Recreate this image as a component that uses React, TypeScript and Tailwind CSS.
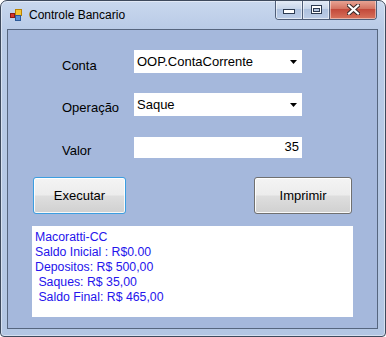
import * as React from 'react';

const font = { fontFamily: '"Liberation Sans", Arial, sans-serif' };

/* ========================= title bar bits ========================= */
function AppIcon() {
  return (
    <svg width="12" height="12" viewBox="0 0 12 12" className="mt-[8px] ml-[9px] shrink-0">
      <rect x="0.5" y="4.5" width="4" height="4" fill="#d8342c" stroke="#8c1a14" />
      <rect x="5.5" y="0.5" width="6" height="6" fill="#f5c534" stroke="#b98300" />
      <rect x="5.5" y="6.5" width="5" height="5" fill="#5b8fd6" stroke="#2c5a98" />
    </svg>
  );
}

function CaptionButtons() {
  return (
    <div className="-mt-[1px] mr-[8px] flex h-[20px] overflow-hidden rounded-b-[4px] border border-t-0 border-[#4f5e78]">
      <div className="flex w-[26px] items-center justify-center bg-[linear-gradient(#e6edf7,#c8d6ea_45%,#aec1de_50%,#bccde7)] pt-[4px] shadow-[inset_0_0_0_1px_rgba(255,255,255,0.55)]">
        <svg width="12" height="5" viewBox="0 0 12 5">
          <rect x="0.5" y="0.5" width="11" height="4" fill="#fff" stroke="#2c3a50" />
        </svg>
      </div>
      <div className="w-[1px] bg-[#4f5e78]" />
      <div className="flex w-[26px] items-center justify-center bg-[linear-gradient(#e6edf7,#c8d6ea_45%,#aec1de_50%,#bccde7)] shadow-[inset_0_0_0_1px_rgba(255,255,255,0.55)]">
        <svg width="11" height="9" viewBox="0 0 11 9">
          <rect x="0.5" y="0.5" width="10" height="8" fill="#fff" stroke="#2c3a50" />
          <rect x="2.5" y="3.5" width="6" height="3" fill="#b4c4de" stroke="#2c3a50" />
        </svg>
      </div>
      <div className="w-[1px] bg-[#4f5e78]" />
      <div className="flex w-[46px] items-center justify-center bg-[linear-gradient(#eaa99a,#d47462_45%,#c34a3b_50%,#d8735c)] shadow-[inset_0_0_0_1px_rgba(255,255,255,0.45)]">
        <svg width="13" height="11" viewBox="0 0 13 11">
          <path d="M2 1.5 L11 9.5 M11 1.5 L2 9.5" stroke="#3a2a2a" strokeWidth="4.2" strokeLinecap="square" />
          <path d="M2 1.5 L11 9.5 M11 1.5 L2 9.5" stroke="#fff" strokeWidth="2.2" strokeLinecap="square" />
        </svg>
      </div>
    </div>
  );
}

/* ========================= form controls ========================= */
function Combo({ value }: { value: string }) {
  return (
    <div className="flex h-[23px] w-[168px] items-center justify-between bg-white pl-[3px] pr-[5px] text-[13px] leading-[15px] text-black">
      <span>{value}</span>
      <svg width="7" height="4" viewBox="0 0 7 4">
        <path d="M0 0 H7 L3.5 4 Z" fill="#000" />
      </svg>
    </div>
  );
}

function WinButton({ label, focused }: { label: string; focused?: boolean }) {
  return (
    <button
      className={
        'flex h-[37px] items-center justify-center rounded-[3px] border text-[13px] leading-[15px] text-black ' +
        'bg-[linear-gradient(#f4f4f4,#ececec_48%,#dedede_52%,#d0d0d0)] shadow-[inset_0_0_0_1px_rgba(255,255,255,0.85)] ' +
        (focused ? 'w-[93px] border-[#3c9ee0]' : 'w-[98px] border-[#707070]')
      }
    >
      {label}
    </button>
  );
}

/* ========================= page ========================= */
export default function App() {
  const report = [
    'Macoratti-CC',
    'Saldo Inicial : R$0.00',
    'Depositos: R$ 500,00',
    ' Saques: R$ 35,00',
    ' Saldo Final: R$ 465,00',
  ];

  return (
    <div
      style={font}
      className="flex h-[337px] w-[386px] flex-col overflow-hidden rounded-t-[7px] rounded-b-[4px] border border-[#3e4a5d] bg-[linear-gradient(#c9d8ee,#b8cae6_30px,#b3c6e3)] shadow-[inset_0_0_0_1px_rgba(255,255,255,0.45)]"
    >
      {/* title bar */}
      <div className="flex h-[28px] shrink-0 items-start justify-between">
        <div className="flex items-start">
          <AppIcon />
          <span className="ml-[7px] mt-[7px] text-[12px] leading-[14px] text-black">Controle Bancario</span>
        </div>
        <CaptionButtons />
      </div>

      {/* client area */}
      <div className="mx-[6px] mb-[7px] mr-[7px] flex-1 border border-[#56667f] bg-[#a5b8dc]">
        <div className="pl-[54px] pt-[20px]">
          <div className="flex">
            <div className="w-[72px] pt-[8px] text-[13px] leading-[15px] text-black">Conta</div>
            <Combo value="OOP.ContaCorrente" />
          </div>
          <div className="mt-[20px] flex">
            <div className="w-[72px] pt-[7px] text-[13px] leading-[15px] text-black">Operação</div>
            <Combo value="Saque" />
          </div>
          <div className="mt-[21px] flex">
            <div className="w-[72px] pt-[6px] text-[13px] leading-[15px] text-black">Valor</div>
            <div className="h-[21px] w-[168px] bg-white pr-[3px] pt-[2px] text-right text-[13px] leading-[15px] text-black">
              35
            </div>
          </div>
        </div>

        <div className="mt-[19px] flex pl-[25px]">
          <WinButton label="Executar" focused />
          <div className="ml-[128px]">
            <WinButton label="Imprimir" />
          </div>
        </div>

        <div className="ml-[24px] mt-[12px] h-[91px] w-[321px] bg-white pl-[3px] pt-[4px] text-[12.3px] leading-[15px] text-[#2514ec]">
          {report.map((line) => (
            <div key={line} className="whitespace-pre">
              {line}
            </div>
          ))}
        </div>
      </div>
    </div>
  );
}
